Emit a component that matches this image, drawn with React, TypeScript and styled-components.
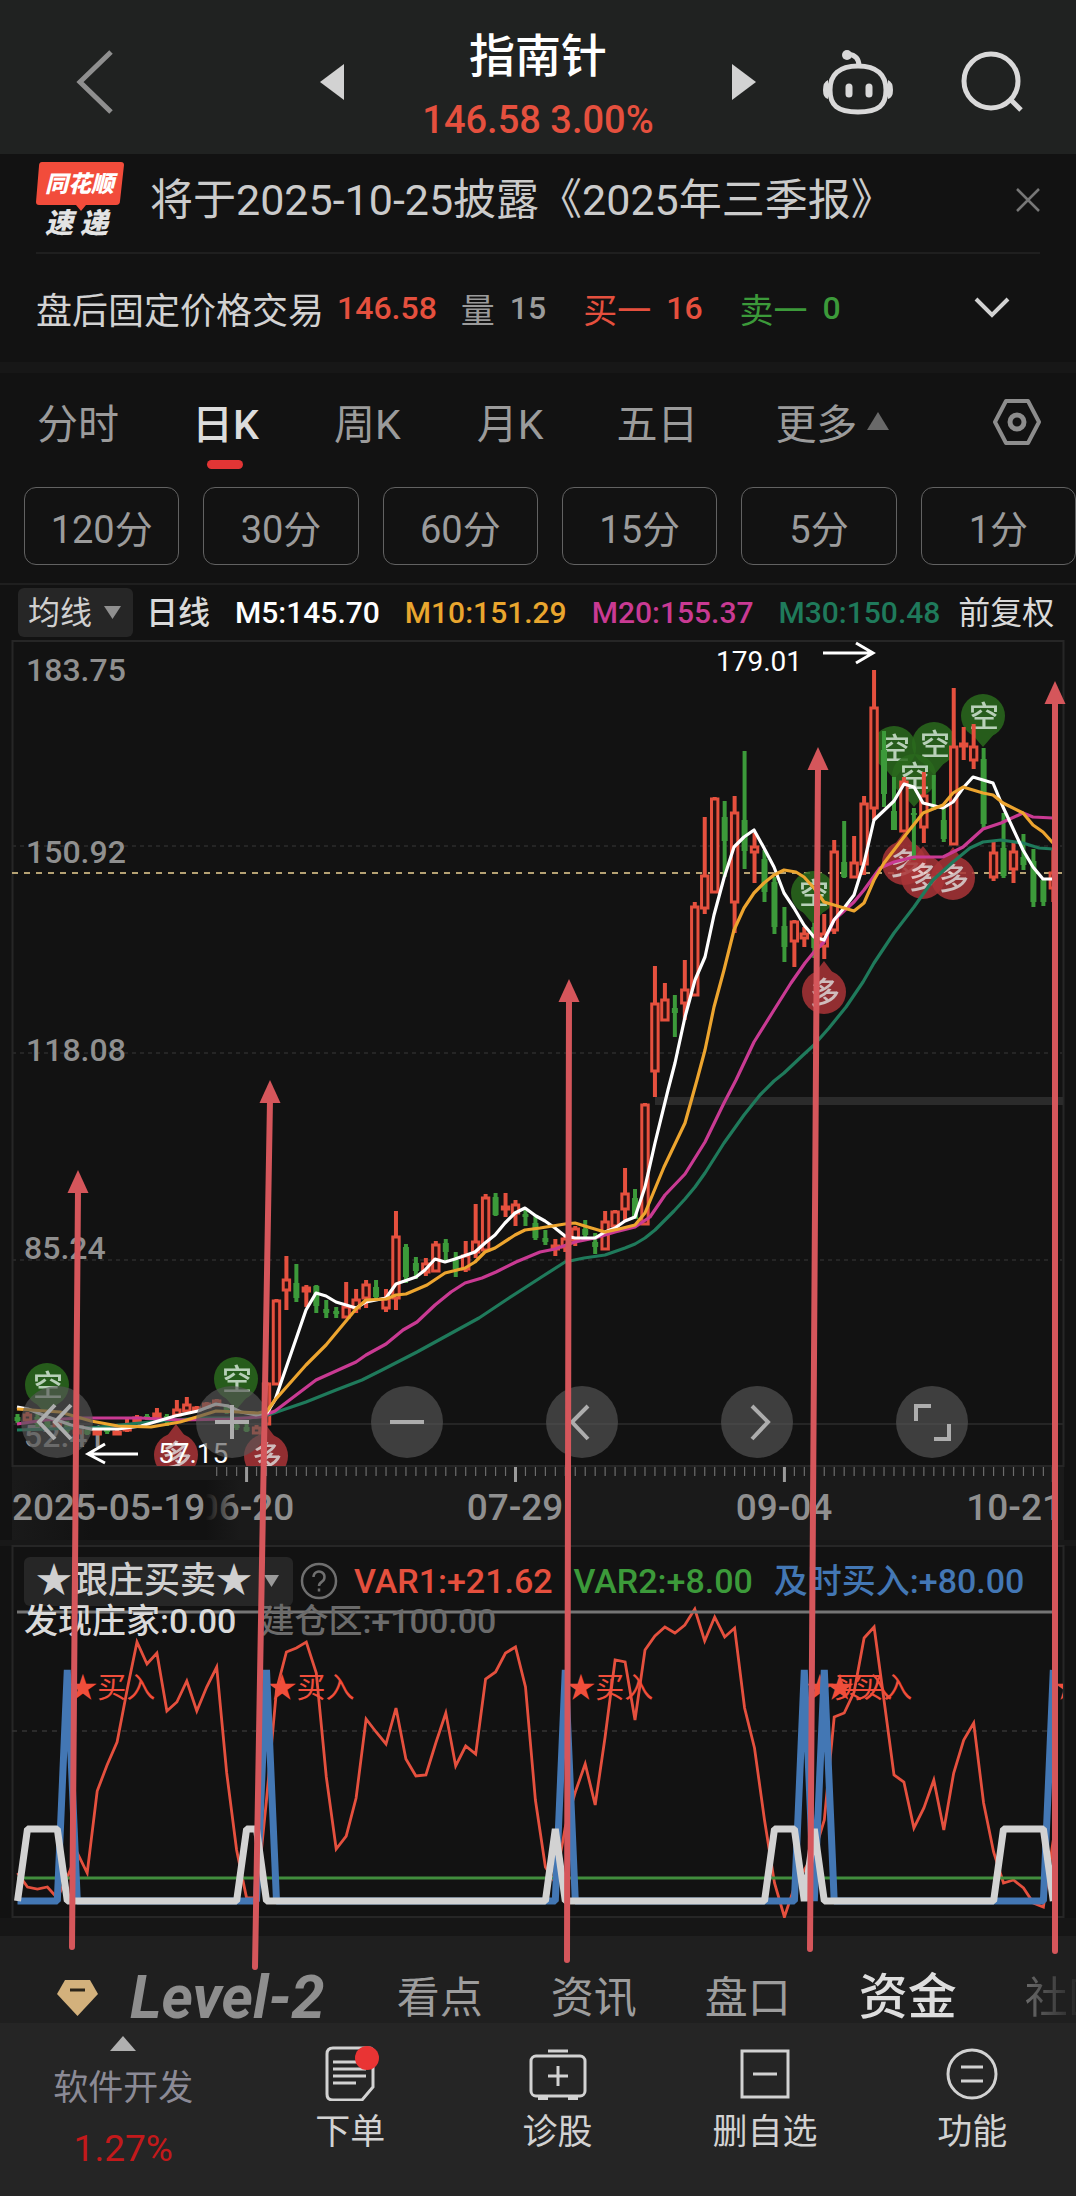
import React from "react";
import styled, { createGlobalStyle } from "styled-components";

const FONT = `Roboto, "Noto Sans CJK SC", sans-serif`;

const C = {
  bg: "#121212",
  up: "#e5503e",
  down: "#3c9a3a",
  blue: "#4377b4",
  text: "#d2d2d2",
  muted: "#9b9b9b",
  axis: "#8f8f8f",
  grid: "#2d2d2d",
  pen: "#d5565b",
};

const Global = createGlobalStyle`
  *, *::before, *::after { box-sizing: border-box; }
  body { margin: 0; background: ${C.bg}; font-family: ${FONT}; }
  button { font: inherit; color: inherit; background: none; border: 0; padding: 0; margin: 0; cursor: pointer; }
  svg { display: block; }
  svg text { font-family: ${FONT}; }
`;

const Page = styled.div`
  min-width: 0;
  overflow: hidden;
  background: ${C.bg};
  color: ${C.text};
`;

/* ---------- header ---------- */
const Header = styled.header`
  display: grid;
  grid-template-columns: 1fr 436px 1fr;
  align-items: center;
  height: 154px;
  padding-top: 10px;
  background: #202221;
`;
const HeaderSide = styled.div<{ $end?: boolean }>`
  display: flex;
  justify-content: ${(p) => (p.$end ? "flex-end" : "flex-start")};
  gap: 68px;
  padding: ${(p) => (p.$end ? "0 53px 0 0" : "0 0 0 76px")};
`;
const Quote = styled.div`
  display: flex;
  align-items: center;
  justify-content: space-between;
`;
const QuoteText = styled.div`
  padding-top: 12px;
  text-align: center;
`;
const StockName = styled.h1`
  margin: 0;
  font-size: 46px;
  line-height: 64px;
  font-weight: 500;
  color: #fff;
`;
const StockPrice = styled.div`
  font-size: 38px;
  line-height: 64px;
  font-weight: 500;
  color: ${C.up};
`;

/* ---------- notice + after-hours ---------- */
const Notice = styled.section`
  display: flex;
  align-items: center;
  gap: 26px;
  height: 100px;
  margin: 0 36px;
  padding-bottom: 6px;
  border-bottom: 2px solid #1f1f1f;
`;
const NoticeLink = styled.a`
  flex: 1;
  font-size: 43px;
  line-height: 60px;
  color: #cbcbcb;
  text-decoration: none;
  white-space: nowrap;
`;
const AfterHours = styled.section`
  display: flex;
  align-items: center;
  height: 108px;
  padding: 0 66px 0 36px;
  font-size: 36px;
  white-space: nowrap;
`;
const Pair = styled.span<{ $color: string; $gap: number }>`
  display: flex;
  align-items: center;
  gap: 15px;
  margin-left: ${(p) => p.$gap}px;
  font-size: 34px;
  color: ${(p) => p.$color};
  b { font-weight: 500; font-size: 32px; }
`;
const Push = styled.span`
  flex: 1;
`;
const Band = styled.div`
  height: 11px;
  background: #171717;
`;

/* ---------- period tabs ---------- */
const Periods = styled.nav`
  display: flex;
  align-items: center;
  height: 98px;
  padding: 0 34px 0 37px;
`;
const PeriodTab = styled.button<{ $on?: boolean; $gap: number }>`
  position: relative;
  display: flex;
  align-items: center;
  gap: 10px;
  height: 98px;
  padding-bottom: 2px;
  margin-left: ${(p) => p.$gap}px;
  font-size: 41px;
  font-weight: ${(p) => (p.$on ? 500 : 400)};
  color: ${(p) => (p.$on ? "#dcdcdc" : C.muted)};
  &::after {
    content: "";
    display: ${(p) => (p.$on ? "block" : "none")};
    position: absolute;
    left: calc(50% - 18px);
    bottom: 2px;
    width: 36px;
    height: 9px;
    border-radius: 5px;
    background: #e23535;
  }
`;
const Pills = styled.div`
  display: flex;
  gap: 24px;
  padding: 16px 0 18px 24px;
`;
const Pill = styled.button`
  flex: 1;
  height: 78px;
  border: 1px solid #626262;
  border-radius: 12px;
  font-size: 38px;
  color: ${C.muted};
`;

/* ---------- average line row ---------- */
const AverageRow = styled.div`
  display: flex;
  align-items: center;
  gap: 18px;
  height: 57px;
  padding-left: 18px;
  border-top: 2px solid #1f1f1f;
  font-size: 32px;
  line-height: 48px;
  white-space: nowrap;
`;
const AverageList = styled.div`
  display: flex;
  align-items: center;
  gap: 25px;
`;
const Chip = styled.button<{ $size: number; $pad: string; $after?: number }>`
  display: flex;
  align-items: center;
  gap: 12px;
  height: 49px;
  padding: ${(p) => p.$pad};
  margin-right: ${(p) => p.$after ?? 0}px;
  border-radius: 6px;
  background: #262626;
  font-size: ${(p) => p.$size}px;
  color: #d0d0d0;
`;
const Average = styled.span<{ $color: string }>`
  font-size: 30px;
  font-weight: 500;
  color: ${(p) => p.$color};
`;
const Plain = styled.span<{ $strong?: boolean }>`
  font-weight: ${(p) => (p.$strong ? 500 : 400)};
  color: #dadada;
`;

/* ---------- chart stage ---------- */
const Stage = styled.div`
  position: relative;
`;
const Pane = styled.section`
  position: relative;
`;
const Plot = styled.svg`
  width: 100%;
  height: auto;
`;
const Pen = styled.svg`
  position: absolute;
  left: 0;
  top: 0;
  width: 100%;
  height: auto;
  pointer-events: none;
`;
const ChartTools = styled.div`
  position: absolute;
  left: 21px;
  bottom: 82px;
  display: flex;
  gap: 103px;
`;
const ToolButton = styled.button`
  display: grid;
  place-items: center;
  width: 72px;
  height: 72px;
  border-radius: 50%;
  background: rgba(86, 86, 86, 0.65);
`;
const Legend = styled.div`
  position: absolute;
  left: 24px;
  right: 0;
  top: 16px;
  font-size: 34px;
  font-weight: 500;
  white-space: nowrap;
`;
const LegendRow = styled.div<{ $gap: number; $h: number }>`
  display: flex;
  align-items: center;
  gap: ${(p) => p.$gap}px;
  height: ${(p) => p.$h}px;
  line-height: ${(p) => p.$h}px;
`;
const LegendItem = styled.span<{ $color: string }>`
  color: ${(p) => p.$color};
`;
const Help = styled.button`
  margin-right: -5px;
`;

/* ---------- section tabs ---------- */
const Sections = styled.nav`
  display: flex;
  align-items: center;
  gap: 68px;
  height: 87px;
  padding: 36px 0 0 57px;
  background: #1f1f1f;
  white-space: nowrap;
`;
const SectionTab = styled.button<{ $kind?: "on" | "fade" }>`
  flex: none;
  line-height: 50px;
  font-size: ${(p) => (p.$kind === "on" ? 49 : 43)}px;
  font-weight: ${(p) => (p.$kind === "on" ? 500 : 400)};
  color: ${(p) => (p.$kind === "on" ? "#dedede" : "#9d9d9d")};
  ${(p) =>
    p.$kind === "fade" &&
    `background: linear-gradient(to right, #6a6a6a, #1f1f1f 58px);
     background-clip: text; -webkit-background-clip: text; color: transparent;`}
`;
const LevelTab = styled.button`
  display: flex;
  align-items: center;
  gap: 32px;
  flex: none;
  padding-right: 4px;
  font-size: 60px;
  line-height: 50px;
  font-weight: 700;
  font-style: italic;
  color: #8e8e8e;
`;

/* ---------- bottom bar ---------- */
const BottomBar = styled.footer`
  display: grid;
  grid-template-columns: 246fr repeat(4, 207fr);
  height: 173px;
  background: #252525;
`;
const Sector = styled.button`
  display: flex;
  flex-direction: column;
  align-items: center;
  padding-top: 13px;
  font-size: 35px;
  line-height: 60px;
  color: #8b8a96;
`;
const SectorChange = styled.span`
  font-size: 37px;
  color: #c3191b;
`;
const SectorName = styled.span`
  margin-top: 8px;
`;
const Action = styled.button`
  display: flex;
  flex-direction: column;
  align-items: center;
  padding-top: 22px;
  gap: 4px;
  font-size: 35px;
  line-height: 56px;
  color: ${C.text};
`;

/* ---------- chart data ---------- */
const xAt = (i: number) => 17.5 + i * 9.96;

// [direction, high, body top, body bottom, low] in plot units, one row per day
type Candle = ["u" | "d", number, number, number, number];
const candles: Candle[] = [
  ["d", 1414, 1417, 1421, 1423], ["u", 1412, 1414, 1420, 1423], ["d", 1414, 1417, 1424, 1427],
  ["d", 1418, 1420, 1427, 1430], ["u", 1419, 1422, 1428, 1430], ["d", 1421, 1424, 1431, 1433],
  ["u", 1424, 1427, 1433, 1434], ["d", 1427, 1430, 1434, 1435], ["u", 1428, 1430, 1434, 1435],
  ["d", 1426, 1427, 1432, 1434], ["u", 1430, 1431, 1434, 1435], ["u", 1418, 1425, 1430, 1432],
  ["u", 1415, 1417, 1421, 1422], ["d", 1414, 1416, 1419, 1420], ["u", 1408, 1413, 1417, 1419],
  ["d", 1414, 1416, 1420, 1426], ["u", 1400, 1409, 1415, 1416], ["u", 1397, 1404, 1411, 1412],
  ["u", 1406, 1407, 1410, 1411], ["u", 1402, 1403, 1407, 1409], ["u", 1399, 1400, 1405, 1406],
  ["d", 1404, 1406, 1412, 1414], ["d", 1423, 1425, 1428, 1430], ["d", 1424, 1427, 1431, 1432],
  ["u", 1425, 1427, 1433, 1434], ["u", 1382, 1383, 1424, 1424], ["u", 1299, 1300, 1384, 1385],
  ["u", 1256, 1279, 1290, 1310], ["d", 1264, 1283, 1298, 1302], ["u", 1285, 1287, 1291, 1307],
  ["d", 1285, 1286, 1306, 1313], ["d", 1300, 1309, 1313, 1318], ["d", 1307, 1311, 1314, 1318],
  ["u", 1282, 1306, 1317, 1318], ["u", 1289, 1299, 1308, 1313], ["u", 1280, 1284, 1298, 1308],
  ["d", 1280, 1287, 1297, 1298], ["u", 1289, 1298, 1308, 1312], ["u", 1211, 1236, 1298, 1310],
  ["d", 1244, 1247, 1277, 1283], ["d", 1257, 1263, 1271, 1279], ["u", 1258, 1263, 1272, 1276],
  ["u", 1241, 1244, 1271, 1272], ["d", 1239, 1243, 1252, 1260], ["d", 1252, 1260, 1269, 1277],
  ["u", 1241, 1255, 1269, 1272], ["u", 1204, 1241, 1252, 1258], ["u", 1194, 1197, 1250, 1252],
  ["d", 1193, 1197, 1215, 1216], ["u", 1193, 1206, 1209, 1217], ["u", 1200, 1204, 1213, 1226],
  ["d", 1209, 1214, 1217, 1226], ["d", 1215, 1223, 1238, 1240], ["d", 1230, 1238, 1242, 1245],
  ["u", 1239, 1245, 1249, 1256], ["u", 1237, 1238, 1247, 1252], ["u", 1226, 1228, 1240, 1246],
  ["d", 1220, 1229, 1235, 1237], ["d", 1233, 1242, 1247, 1254], ["u", 1211, 1221, 1249, 1250],
  ["u", 1210, 1211, 1226, 1226], ["u", 1168, 1193, 1209, 1222], ["d", 1189, 1198, 1219, 1219],
  ["u", 1103, 1104, 1224, 1224], ["u", 966, 1003, 1071, 1097], ["u", 983, 999, 1020, 1021],
  ["d", 995, 1008, 1013, 1037], ["u", 960, 989, 1003, 1020], ["u", 902, 906, 995, 996],
  ["u", 817, 875, 908, 914], ["u", 797, 798, 892, 893], ["d", 801, 817, 841, 877],
  ["u", 796, 812, 902, 933], ["d", 751, 820, 851, 869], ["u", 833, 846, 852, 883],
  ["d", 850, 859, 892, 902], ["d", 877, 882, 927, 934], ["d", 907, 926, 947, 962],
  ["u", 920, 921, 941, 967], ["u", 927, 933, 938, 947], ["d", 923, 927, 948, 958],
  ["u", 914, 933, 946, 959], ["u", 840, 851, 930, 934], ["d", 821, 862, 877, 878],
  ["u", 836, 862, 877, 878], ["u", 796, 803, 864, 875], ["u", 670, 707, 808, 820],
  ["d", 731, 750, 794, 807], ["d", 777, 811, 830, 830], ["u", 777, 781, 831, 832],
  ["d", 808, 813, 815, 860], ["u", 772, 795, 827, 843], ["d", 775, 806, 808, 810],
  ["d", 808, 820, 839, 842], ["u", 688, 746, 844, 845], ["u", 727, 743, 746, 760],
  ["u", 724, 746, 760, 769], ["d", 748, 759, 824, 828], ["u", 842, 852, 877, 881],
  ["d", 813, 848, 876, 878], ["u", 843, 851, 869, 883], ["d", 834, 857, 865, 870],
  ["d", 849, 861, 902, 907], ["d", 878, 880, 902, 906], ["u", 850, 872, 888, 902],
];

const averages = [
  {
    color: "#1f7a5b",
    points:
      "17,1430 50,1429 100,1427 150,1422 200,1418 250,1418 268,1415 306,1402 336,1390 362,1380 382,1370 417,1352 448,1335 479,1318 506,1300 540,1278 565,1262 584,1258 605,1255 625,1248 635,1244 645,1238 655,1230 674,1211 685,1199 695,1187 705,1173 724,1143 744,1115 760,1095 774,1081 784,1073 801,1057 814,1045 829,1028 846,1007 863,982 874,963 894,933 914,907 933,880 953,862 970,848 983,842 1001,840 1023,843 1039,848 1053,849",
  },
  {
    color: "#c93a93",
    points:
      "17,1424 45,1420 80,1418 140,1418 180,1420 230,1419 260,1417 275,1411 316,1380 356,1362 366,1355 386,1344 403,1330 417,1322 435,1305 451,1292 465,1283 482,1278 496,1272 516,1262 540,1252 555,1249 575,1242 595,1238 615,1232 635,1227 650,1217 665,1195 685,1174 705,1142 724,1103 736,1080 754,1042 774,1010 791,983 805,963 814,952 824,942 834,920 854,902 864,890 880,868 894,862 914,857 943,857 963,847 983,829 1001,823 1023,813 1033,817 1053,818",
  },
  {
    color: "#fff",
    points:
      "17,1407 28,1409 48,1417 71,1425 91,1429 118,1429 141,1426 165,1419 175,1416 198,1411 216,1404 228,1406 241,1412 256,1415 267,1413 275,1400 306,1310 316,1293 326,1296 336,1302 356,1308 366,1302 386,1298 396,1284 416,1277 425,1270 435,1259 445,1262 455,1259 475,1252 485,1243 495,1235 505,1223 515,1213 525,1208 536,1216 545,1221 555,1228 565,1236 575,1238 595,1238 605,1232 615,1228 625,1221 635,1217 645,1187 655,1143 668,1090 675,1063 685,1017 695,980 705,957 714,915 724,878 734,847 744,837 754,830 764,848 774,867 784,893 794,908 804,925 814,937 824,940 834,920 844,908 854,895 864,863 874,820 894,801 904,784 914,787 923,803 943,808 953,802 963,788 973,777 983,780 993,783 1003,807 1023,850 1033,867 1043,879 1053,879",
  },
  {
    color: "#eda52f",
    points:
      "17,1409 60,1412 91,1421 118,1426 151,1427 180,1422 200,1416 216,1411 238,1412 258,1413 267,1411 275,1400 306,1365 326,1345 356,1309 366,1300 386,1299 396,1295 406,1294 427,1285 445,1273 465,1268 475,1262 485,1252 495,1248 515,1235 525,1230 540,1228 565,1224 575,1223 588,1227 605,1232 619,1229 635,1225 645,1213 664,1167 685,1123 697,1080 705,1050 714,1007 724,970 734,930 744,908 754,893 764,883 774,875 784,870 796,872 804,877 814,888 824,902 844,908 854,911 864,903 874,880 884,863 904,837 923,813 943,805 953,793 963,787 983,793 993,795 1003,803 1023,813 1033,825 1043,832 1053,843",
  },
];

const shorts = [[47, 1385], [236, 1379], [813, 893], [894, 748], [934, 744], [914, 776], [983, 716]];
const longs = [[176, 1455], [266, 1456], [824, 992], [904, 863], [923, 877], [953, 878]];

const priceLabels: [string, number, number][] = [
  ["183.75", 26, 681], ["150.92", 26, 863], ["118.08", 26, 1061], ["85.24", 24, 1259], ["52.41", 24, 1447],
];

const var1 = [
  333, 347, 349, 347, 358, 337, 313, 333, 251, 225, 202, 150, 102, 124, 113, 171, 162, 141, 171, 147, 127, 233,
  310, 358, 358, 260, 150, 112, 108, 102, 133, 237, 309, 296, 258, 179, 192, 204, 168, 219, 236, 235, 203, 173,
  226, 206, 214, 139, 132, 113, 107, 147, 260, 327, 343, 287, 252, 224, 265, 197, 120, 122, 180, 110, 96, 87, 93,
  85, 69, 101, 77, 97, 88, 168, 208, 280, 343, 377, 347, 330, 313, 280, 177, 173, 152, 98, 87, 160, 235, 242,
  288, 268, 240, 290, 233, 200, 183, 263, 312, 343, 340, 348, 363, 367, 300,
];
const line = (ys: number[]) => ys.map((y, i) => `${xAt(i).toFixed(1)},${y}`).join(" ");
const flags = (on: number[], high: number, low: number) =>
  var1.map((_, i) => (on.includes(i) ? high : low));
const buyDays = [5, 25, 55, 79, 81, 104];
const buildDays = [1, 2, 3, 4, 23, 24, 54, 76, 77, 78, 80, 99, 100, 101, 102, 103];

// tip x, tip y, tail x, tail y
const penArrows = [
  [78, 1170, 72, 1947],
  [270, 1080, 255, 1967],
  [569, 979, 567, 1960],
  [818, 747, 810, 1949],
  [1055, 681, 1055, 1951],
];

/* ---------- drawings ---------- */
const Tri = ({ d, w, h, color }: { d: string; w: number; h: number; color: string }) => (
  <svg width={w} height={h} viewBox={`0 0 ${w} ${h}`} aria-hidden="true">
    <path d={d} fill={color} />
  </svg>
);

const Brand = () => (
  <svg width="88" height="84" viewBox="0 -4 88 84" role="img" aria-label="同花顺速递">
    <path d="M6 0H85q3 0 3 3l-4 36q0 4-4 4H50l-5 6-5-6H3q-3 0-3-3L3 4q0-4 3-4z" fill="#f24c3b" />
    <text x="9" y="30" fontSize="23" fontWeight="900" fontStyle="italic" fill="#fff">同花顺</text>
    <text x="9" y="71" fontSize="28" fontWeight="900" fontStyle="italic" fill="#e4e4e4">速</text>
    <text x="44" y="71" fontSize="28" fontWeight="900" fontStyle="italic" fill="#e4e4e4">递</text>
  </svg>
);

const Robot = () => (
  <svg width="70" height="66" viewBox="0 0 70 66" fill="none" stroke="#d9d9d9" aria-hidden="true">
    <path d="M35 17C54 17 63 26 63 41S56 63 35 63 7 56 7 41 16 17 35 17z" strokeWidth="5" />
    <path d="M36 17C36 9 32 6 25 5" strokeWidth="5" />
    <circle cx="24" cy="6" r="5" fill="#d9d9d9" stroke="none" />
    <path d="M5 31q-5 2-5 10t5 9zM65 31q5 2 5 10t-5 9z" fill="#d9d9d9" stroke="none" />
    <path d="M26 38v7M46 38v7" strokeWidth="7" strokeLinecap="round" />
  </svg>
);

const Search = () => (
  <svg width="62" height="62" viewBox="0 0 62 62" fill="none" stroke="#d9d9d9" strokeWidth="5" aria-hidden="true">
    <circle cx="30" cy="30" r="27" />
    <path d="M49 48l11 11" />
  </svg>
);

const Marker = ({ x, y, up }: { x: number; y: number; up?: boolean }) => (
  <g opacity="0.85">
    <circle cx={x} cy={y} r="22" fill={up ? "#a93437" : "#2a6a1d"} />
    <path
      d={up ? `M${x - 9} ${y - 19}L${x} ${y - 31}L${x + 9} ${y - 19}z` : `M${x - 12} ${y + 17}L${x} ${y + 31}L${x + 12} ${y + 17}z`}
      fill={up ? "#a93437" : "#2a6a1d"}
    />
    <text x={x + 1} y={y + 11} textAnchor="middle" fontSize="30" fontWeight="500" fill={up ? "#f1dada" : "#d5f2d5"}>
      {up ? "多" : "空"}
    </text>
  </g>
);

const PriceChart = () => (
  <Plot viewBox="0 640 1076 900" role="img" aria-label="日K线图">
    <defs>
      <clipPath id="price-area"><rect x="12" y="640" width="1052" height="826" /></clipPath>
      <linearGradient id="date-fade" x1="0" x2="1">
        <stop offset="0" stopColor="#1a1a1a" />
        <stop offset="0.35" stopColor="#121212" />
        <stop offset="0.85" stopColor="#121212" />
        <stop offset="1" stopColor="#121212" stopOpacity="0" />
      </linearGradient>
    </defs>
    <rect x="12" y="1466" width="1052" height="74" fill="#1a1a1a" />
    <g stroke={C.grid} strokeWidth="1.5" strokeDasharray="4 4">
      <path d="M12 846H1062M12 1053H1062M12 1260H1062" />
    </g>
    <path d="M12 1424H1063" stroke={C.grid} strokeWidth="1.5" />
    <rect x="12.5" y="641" width="1051" height="825" fill="none" stroke="#262626" strokeWidth="2" />
    <rect x="655" y="1097" width="408" height="8" fill="#2b2b2b" />
    <g fontSize="32" fontWeight="500" fill={C.axis}>
      {priceLabels.map(([t, x, y]) => <text key={t} x={x} y={y}>{t}</text>)}
    </g>
    <path d="M12 873H1062" stroke="#b5a274" strokeWidth="2" strokeDasharray="6 6" />
    <g clipPath="url(#price-area)">
      {shorts.map(([x, y]) => <Marker key={`${x}-${y}`} x={x} y={y} />)}
      {longs.map(([x, y]) => <Marker key={`${x}-${y}`} x={x} y={y} up />)}
      {candles.map(([dir, hi, top, bottom, lo], i) => {
        const x = xAt(i);
        return dir === "u" ? (
          <g key={i} stroke={C.up} fill="none">
            <path d={`M${x} ${hi}V${top}M${x} ${bottom}V${lo}`} strokeWidth="4" />
            <rect x={x - 3.2} y={top + 1} width="6.4" height={Math.max(bottom - top - 1, 2)} strokeWidth="3" fill="#2a1010" />
          </g>
        ) : (
          <g key={i} fill={C.down}>
            <rect x={x - 2} y={hi} width="4" height={lo - hi} />
            <rect x={x - 3} y={top} width="6" height={bottom - top} />
          </g>
        );
      })}
      {averages.map((a) => (
        <polyline key={a.color} points={a.points} fill="none" stroke={a.color} strokeWidth="3.2" strokeLinejoin="round" />
      ))}
    </g>
    <g fill="#fff" fontSize="28">
      <text x="716" y="671">179.01</text>
      <text x="158" y="1463">57.15</text>
    </g>
    <g fill="none" stroke="#fff" strokeWidth="3">
      <path d="M823 653H872M856 643l17 10-17 10" />
      <path d="M138 1454H88M105 1444l-17 10 17 9" />
    </g>
    <g stroke="#6c6c6c" strokeWidth="1.2">
      {candles.map((_, i) => i > 19 && <path key={i} d={`M${xAt(i)} 1467v9`} />)}
    </g>
    <g stroke="#9a9a9a" strokeWidth="3">
      {[23, 50, 77, 104].map((i) => <path key={i} d={`M${xAt(i)} 1467v15`} />)}
    </g>
    <g fontSize="37" fontWeight="500" fill={C.axis}>
      <text x="246" y="1520" textAnchor="middle">06-20</text>
      <rect x="12" y="1480" width="228" height="60" fill="url(#date-fade)" />
      <text x="12" y="1520">2025-05-19</text>
      <text x="515" y="1520" textAnchor="middle">07-29</text>
      <text x="784" y="1520" textAnchor="middle">09-04</text>
      <text x="1063" y="1520" textAnchor="end">10-21</text>
    </g>
  </Plot>
);

const IndicatorChart = () => (
  <Plot viewBox="0 0 1076 396" role="img" aria-label="跟庄买卖指标">
    <defs>
      <clipPath id="indicator-area"><rect x="12" y="5" width="1051" height="373" /></clipPath>
    </defs>
    <rect width="1076" height="6" fill="#181818" />
    <rect y="378" width="1076" height="18" fill="#161616" />
    <rect x="12.5" y="6" width="1051" height="371" fill="none" stroke="#262626" strokeWidth="2" />
    <path d="M12 191H1062" stroke="#343434" strokeWidth="1.5" strokeDasharray="5 5" />
    <g clipPath="url(#indicator-area)" fill="none">
      <polyline points={line(var1)} stroke={C.up} strokeWidth="2.8" />
      <path d="M17 338H1053" stroke="#418d3d" strokeWidth="3" />
      <g fill="#f04e3b" fontSize="29">
        {buyDays.map((i) => <text key={i} x={xAt(i) + 1} y="158">★买入</text>)}
      </g>
      <polyline points={line(flags(buyDays, 130, 361))} stroke={C.blue} strokeWidth="7" strokeLinejoin="bevel" />
      <polyline points={line(flags(buildDays, 289, 361))} stroke="#d2d2d2" strokeWidth="7" strokeLinejoin="bevel" />
      <path d="M17 72H1053" stroke="#757575" strokeWidth="3" />
    </g>
  </Plot>
);

const tools = [
  { label: "向左翻页", d: "M34 19L18 36l16 17M50 19L34 36l16 17" },
  { label: "放大", d: "M36 19V53M19 36H53" },
  { label: "缩小", d: "M19 36H53" },
  { label: "左移", d: "M42 20L26 36l16 17" },
  { label: "右移", d: "M31 20L47 36 31 53" },
  { label: "全屏", d: "M35 20H20V35M53 38V53H38" },
];

const Icon = ({ children }: { children: React.ReactNode }) => (
  <svg width="60" height="56" viewBox="0 0 60 56" fill="none" stroke="#d2d2d2" strokeWidth="3" aria-hidden="true">
    {children}
  </svg>
);

export default function App() {
  return (
    <Page>
      <Global />
      <Header>
        <HeaderSide>
          <button aria-label="返回">
            <svg width="38" height="64" viewBox="0 0 38 64" fill="none" stroke="#8f8f8f" strokeWidth="5" aria-hidden="true">
              <path d="M35 2L4 32l31 30" />
            </svg>
          </button>
        </HeaderSide>
        <Quote>
          <button aria-label="上一只"><Tri w={24} h={36} d="M24 0V36L0 18z" color="#d2d2d2" /></button>
          <QuoteText>
            <StockName>指南针</StockName>
            <StockPrice>146.58 3.00%</StockPrice>
          </QuoteText>
          <button aria-label="下一只"><Tri w={24} h={36} d="M0 0V36L24 18z" color="#d2d2d2" /></button>
        </Quote>
        <HeaderSide $end>
          <button aria-label="智能助手"><Robot /></button>
          <button aria-label="搜索"><Search /></button>
        </HeaderSide>
      </Header>

      <Notice>
        <Brand />
        <NoticeLink href="#report">将于2025-10-25披露《2025年三季报》</NoticeLink>
        <button aria-label="关闭">
          <svg width="24" height="24" viewBox="0 0 24 24" stroke="#777" strokeWidth="2.5" aria-hidden="true">
            <path d="M1 1L23 23M23 1L1 23" />
          </svg>
        </button>
      </Notice>

      <AfterHours>
        <span>盘后固定价格交易</span>
        <Pair $color={C.up} $gap={13}><b>146.58</b></Pair>
        <Pair $color="#9b9b9b" $gap={24}>量 <b>15</b></Pair>
        <Pair $color={C.up} $gap={37}>买一 <b>16</b></Pair>
        <Pair $color={C.down} $gap={37}>卖一 <b>0</b></Pair>
        <Push />
        <button aria-label="展开">
          <svg width="36" height="22" viewBox="0 0 36 22" fill="none" stroke="#d2d2d2" strokeWidth="4" aria-hidden="true">
            <path d="M2 2L18 18 34 2" />
          </svg>
        </button>
      </AfterHours>
      <Band />

      <Periods>
        <PeriodTab $gap={0}>分时</PeriodTab>
        <PeriodTab $gap={73} $on>日K</PeriodTab>
        <PeriodTab $gap={75}>周K</PeriodTab>
        <PeriodTab $gap={76}>月K</PeriodTab>
        <PeriodTab $gap={73}>五日</PeriodTab>
        <PeriodTab $gap={77}>
          更多 <Tri w={22} h={18} d="M11 0L22 18H0z" color="#696969" />
        </PeriodTab>
        <Push />
        <button aria-label="设置">
          <svg width="50" height="48" viewBox="0 0 50 48" fill="none" stroke="#8d8d8d" aria-hidden="true">
            <path d="M14 3H36L47 24 36 45H14L3 24z" strokeWidth="4" strokeLinejoin="round" />
            <circle cx="25" cy="24" r="7" strokeWidth="5" />
          </svg>
        </button>
      </Periods>
      <Pills>
        {["120分", "30分", "60分", "15分", "5分", "1分"].map((t) => <Pill key={t}>{t}</Pill>)}
      </Pills>

      <AverageRow>
        <Chip $size={32} $pad="0 12px 0 10px" $after={-5}>
          均线 <Tri w={17} h={13} d="M0 0H17L8.5 13z" color="#8f8f8f" />
        </Chip>
        <AverageList>
          <Plain $strong>日线</Plain>
          <Average $color="#fff">M5:145.70</Average>
          <Average $color="#e9a62e">M10:151.29</Average>
          <Average $color="#c93a93">M20:155.37</Average>
          <Average $color="#1f7a5b">M30:150.48</Average>
        </AverageList>
        <Plain>前复权</Plain>
      </AverageRow>

      <Stage>
        <Pane>
          <PriceChart />
          <ChartTools>
            {tools.map((t) => (
              <ToolButton key={t.label} aria-label={t.label}>
                <svg width="72" height="72" viewBox="0 0 72 72" fill="none" stroke="#adadad" strokeWidth="4" aria-hidden="true">
                  <path d={t.d} />
                </svg>
              </ToolButton>
            ))}
          </ChartTools>
        </Pane>
        <Pane>
          <IndicatorChart />
          <Legend>
            <LegendRow $gap={21} $h={50}>
              <Chip $size={36} $pad="0 14px 0 12px" $after={-14}>
                ★跟庄买卖★ <Tri w={15} h={12} d="M0 0H15L7.5 12z" color="#9a9a9a" />
              </Chip>
              <Help aria-label="指标说明">
                <svg width="38" height="38" viewBox="0 0 38 38" fill="none" stroke="#6f6f6f" strokeWidth="2.5" aria-hidden="true">
                  <circle cx="19" cy="19" r="17" />
                  <path d="M13.500 15a5.500 5.500 0 1 1 8.500 4.600c-2 1.300-3 2.200-3 4.400M19 26.500v3" />
                </svg>
              </Help>
              <LegendItem $color={C.up}>VAR1:+21.62</LegendItem>
              <LegendItem $color={C.down}>VAR2:+8.00</LegendItem>
              <LegendItem $color={C.blue}>及时买入:+80.00</LegendItem>
            </LegendRow>
            <LegendRow $gap={24} $h={30}>
              <LegendItem $color="#dadada">发现庄家:0.00</LegendItem>
              <LegendItem $color="#6b6b6b">建仓区:+100.00</LegendItem>
            </LegendRow>
          </Legend>
        </Pane>

        <Sections>
          <LevelTab>
            <svg width="41" height="36" viewBox="0 0 41 36" aria-hidden="true">
              <path d="M8 0H33L41 14 20.500 36 0 14z" fill="#d3b17c" />
              <path d="M13 10H28" stroke="#2a2419" strokeWidth="3" />
            </svg>
            Level-2
          </LevelTab>
          <SectionTab>看点</SectionTab>
          <SectionTab>资讯</SectionTab>
          <SectionTab>盘口</SectionTab>
          <SectionTab $kind="on">资金</SectionTab>
          <SectionTab $kind="fade">社区</SectionTab>
        </Sections>

        <Pen viewBox="0 640 1076 1383" aria-hidden="true">
          {penArrows.map(([tx, ty, bx, by]) => (
            <g key={tx}>
              <path d={`M${tx} ${ty + 20}L${bx} ${by}`} stroke={C.pen} strokeWidth="6" strokeLinecap="round" />
              <path d={`M${tx} ${ty}L${tx + 10.5} ${ty + 23}H${tx - 10.5}z`} fill={C.pen} />
            </g>
          ))}
        </Pen>
      </Stage>

      <BottomBar>
        <Sector>
          <Tri w={26} h={15} d="M13 0L26 15H0z" color="#b0b0b0" />
          <SectorName>软件开发</SectorName>
          <SectorChange>1.27%</SectorChange>
        </Sector>
        <Action>
          <Icon>
            <path d="M13 3H49Q53 3 53 7V42L42 55H13Q7 55 7 49V9Q7 3 13 3z" />
            <path d="M13 17H40M13 24H46M13 31H46M13 38H36" />
            <circle cx="47" cy="13" r="12" fill="#e93434" stroke="none" />
          </Icon>
          下单
        </Action>
        <Action>
          <Icon>
            <rect x="3" y="11" width="54" height="40" rx="5" />
            <path d="M20 6H40M10 53.500H20M40 53.500H50" />
            <path d="M30 21V41M20 31H40" />
          </Icon>
          诊股
        </Action>
        <Action>
          <Icon>
            <rect x="7" y="6" width="46" height="46" />
            <path d="M18 29H42" />
          </Icon>
          删自选
        </Action>
        <Action>
          <Icon>
            <circle cx="30" cy="29" r="24" />
            <path d="M19 22H41M19 36H41" />
          </Icon>
          功能
        </Action>
      </BottomBar>
    </Page>
  );
}
